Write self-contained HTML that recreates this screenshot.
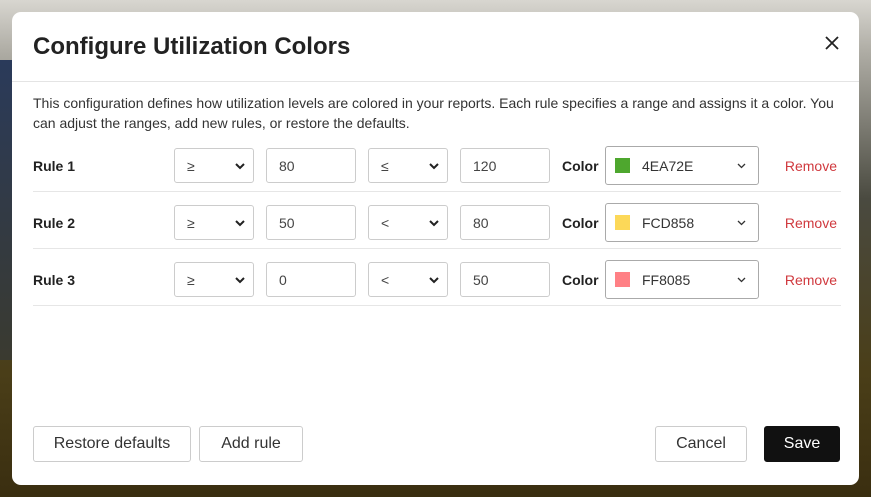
<!DOCTYPE html>
<html><head><style>
*{box-sizing:border-box;margin:0;padding:0}
body{width:871px;height:497px;overflow:hidden;font-family:"Liberation Sans",sans-serif;position:relative;
background:linear-gradient(180deg,#d8d6d0 0%,#b0aea6 10%,#4a4a40 40%,#4a3e18 75%,#3a2e10 100%);}
.bgl{position:absolute;left:0;top:60px;width:20px;height:300px;background:linear-gradient(180deg,#2a3a5a,#3a3a30);}
.modal{position:absolute;left:12px;top:12px;width:847px;height:473px;background:#fff;border-radius:9px;}
h1{position:absolute;left:21px;top:21px;font-size:24px;font-weight:bold;color:#222;}
.x{position:absolute;left:812px;top:23px}
.hr{position:absolute;left:0;width:847px;top:69px;border-top:1.5px solid #e4e4e4}
.desc{position:absolute;left:21px;top:81px;width:810px;font-size:14px;line-height:20px;color:#333}
.row{position:absolute;left:21px;width:808px;height:44px;border-bottom:1px solid #e6e6e6}
.lbl{position:absolute;left:0;top:10px;font-size:14px;font-weight:bold;color:#222}
.box{position:absolute;top:0;height:35px;border:1px solid #ccc;border-radius:3px;font-size:14px;color:#444;padding:9px 12px}
.sel svg{position:absolute;right:8px;top:14px}
.col{position:absolute;left:529px;top:10px;font-size:14px;font-weight:bold;color:#222}
.csel{position:absolute;left:572px;top:-2px;width:154px;height:39px;border:1px solid #aaa;border-radius:3px;font-size:14px;color:#333;padding:11px 0 0 36px}
.sw{position:absolute;left:9px;top:11px;width:15px;height:15px}
.csel svg{position:absolute;right:12px;top:16px}
.rm{position:absolute;right:4px;top:10px;font-size:14px;color:#d0393e}
.btn{position:absolute;top:414px;height:36px;border:1px solid #ccc;border-radius:3px;font-size:16px;color:#333;text-align:center;line-height:34px}
</style></head><body><div class="bgl"></div>
<div class="modal">
<h1>Configure Utilization Colors</h1>
<svg class="x" width="16" height="16" viewBox="0 0 16 16"><path d="M2 2l12 12M14 2L2 14" stroke="#222" stroke-width="1.8"/></svg>
<div class="hr"></div>
<div class="desc">This configuration defines how utilization levels are colored in your reports. Each rule specifies a range and assigns it a color. You can adjust the ranges, add new rules, or restore the defaults.</div>

<div class="row" style="top:136px">
<div class="lbl">Rule 1</div>
<div class="box sel" style="left:141px;width:80px">≥<svg width="10" height="7" viewBox="0 0 10 7"><path d="M1 1l4 4 4-4" stroke="#222" stroke-width="2" fill="none"/></svg></div>
<div class="box" style="left:233px;width:90px">80</div>
<div class="box sel" style="left:335px;width:80px">≤<svg width="10" height="7" viewBox="0 0 10 7"><path d="M1 1l4 4 4-4" stroke="#222" stroke-width="2" fill="none"/></svg></div>
<div class="box" style="left:427px;width:90px">120</div>
<div class="col">Color</div>
<div class="csel"><div class="sw" style="background:#4EA72E"></div>4EA72E<svg width="9" height="6" viewBox="0 0 9 6"><path d="M1 1l3.5 3.5L8 1" stroke="#333" stroke-width="1.3" fill="none"/></svg></div>
<div class="rm">Remove</div>
</div>

<div class="row" style="top:193px">
<div class="lbl">Rule 2</div>
<div class="box sel" style="left:141px;width:80px">≥<svg width="10" height="7" viewBox="0 0 10 7"><path d="M1 1l4 4 4-4" stroke="#222" stroke-width="2" fill="none"/></svg></div>
<div class="box" style="left:233px;width:90px">50</div>
<div class="box sel" style="left:335px;width:80px">&lt;<svg width="10" height="7" viewBox="0 0 10 7"><path d="M1 1l4 4 4-4" stroke="#222" stroke-width="2" fill="none"/></svg></div>
<div class="box" style="left:427px;width:90px">80</div>
<div class="col">Color</div>
<div class="csel"><div class="sw" style="background:#FCD858"></div>FCD858<svg width="9" height="6" viewBox="0 0 9 6"><path d="M1 1l3.5 3.5L8 1" stroke="#333" stroke-width="1.3" fill="none"/></svg></div>
<div class="rm">Remove</div>
</div>

<div class="row" style="top:250px">
<div class="lbl">Rule 3</div>
<div class="box sel" style="left:141px;width:80px">≥<svg width="10" height="7" viewBox="0 0 10 7"><path d="M1 1l4 4 4-4" stroke="#222" stroke-width="2" fill="none"/></svg></div>
<div class="box" style="left:233px;width:90px">0</div>
<div class="box sel" style="left:335px;width:80px">&lt;<svg width="10" height="7" viewBox="0 0 10 7"><path d="M1 1l4 4 4-4" stroke="#222" stroke-width="2" fill="none"/></svg></div>
<div class="box" style="left:427px;width:90px">50</div>
<div class="col">Color</div>
<div class="csel"><div class="sw" style="background:#FF8085"></div>FF8085<svg width="9" height="6" viewBox="0 0 9 6"><path d="M1 1l3.5 3.5L8 1" stroke="#333" stroke-width="1.3" fill="none"/></svg></div>
<div class="rm">Remove</div>
</div>

<div class="btn" style="left:21px;width:158px">Restore defaults</div>
<div class="btn" style="left:187px;width:104px">Add rule</div>
<div class="btn" style="left:643px;width:92px">Cancel</div>
<div class="btn" style="left:752px;width:76px;background:#111;border-color:#111;color:#fff">Save</div>
</div>
</body></html>
